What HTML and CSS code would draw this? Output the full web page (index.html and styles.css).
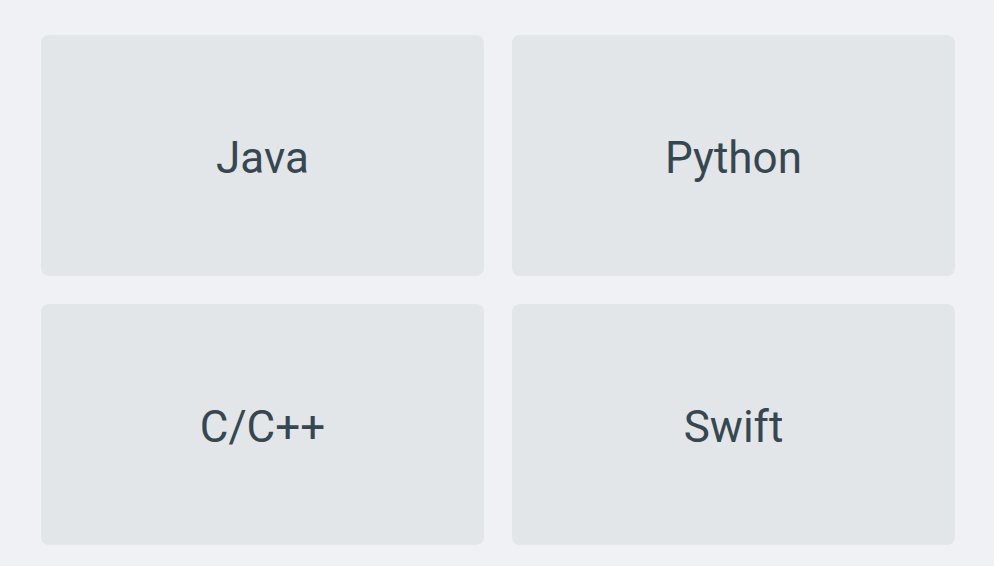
FILE: index.html
```html
<!DOCTYPE html>
<html>
<head>
<meta charset="utf-8">
<link rel="stylesheet" href="styles.css">
</head>
<body>
<div class="grid">
  <div class="card">Java</div>
  <div class="card">Python</div>
  <div class="card">C/C++</div>
  <div class="card">Swift</div>
</div>
</body>
</html>
```
FILE: styles.css
```css
html, body {
  margin: 0;
  padding: 0;
  background: #eff1f5;
  height: 100%;
  overflow: hidden;
}
.grid {
  display: grid;
  grid-template-columns: 443px 443px;
  grid-template-rows: 241px 241px;
  gap: 28px;
  padding: 35px 0 0 41px;
}
.card {
  background: #e2e6e9;
  border-radius: 8px;
  display: flex;
  align-items: center;
  justify-content: center;
  padding-top: 4px;
  box-sizing: border-box;
  font-family: Roboto, sans-serif;
  font-size: 44px;
  color: #37474f;
}
```
